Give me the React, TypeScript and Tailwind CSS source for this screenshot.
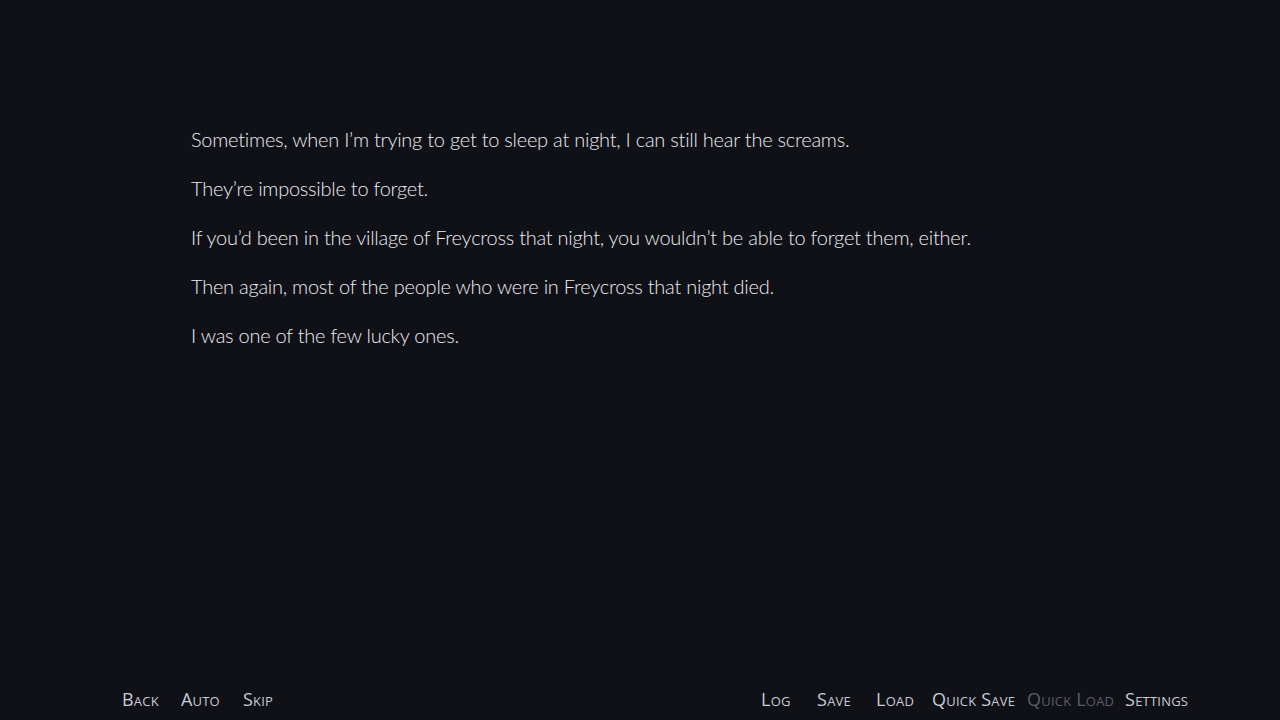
const lines = [
  "Sometimes, when I’m trying to get to sleep at night, I can still hear the screams.",
  "They’re impossible to forget.",
  "If you’d been in the village of Freycross that night, you wouldn’t be able to forget them, either.",
  "Then again, most of the people who were in Freycross that night died.",
  "I was one of the few lucky ones.",
];

// quick menu buttons; w = slot width so each label starts where the next slot begins
const leftMenu = [
  { label: "Back", w: "w-[59px]" },
  { label: "Auto", w: "w-[62px]" },
  { label: "Skip", w: "" },
];
const rightMenu = [
  { label: "Log", w: "w-[56px]", off: false },
  { label: "Save", w: "w-[59px]", off: false },
  { label: "Load", w: "w-[56px]", off: false },
  { label: "Quick Save", w: "w-[95px]", off: false },
  { label: "Quick Load", w: "w-[98px]", off: true },
  { label: "Settings", w: "", off: false },
];

export default function App() {
  return (
    <div className="w-[1280px] h-[720px] bg-[#101117] flex flex-col overflow-hidden">
      <div className="flex-1 pt-[125px] pl-[191px] flex flex-col gap-[20px] font-['Lato',sans-serif] font-light text-[20px] leading-[29px] text-[#ececf2] tracking-[-0.25px]">
        {lines.map((l) => (
          <p key={l}>{l}</p>
        ))}
      </div>
      <div className="h-[40px] flex items-center pl-[122px] pb-[2px] font-['Open_Sans',sans-serif] text-[18px] tracking-[0.2px] [font-variant:small-caps] text-[#c9cad6]">
        <div className="flex">
          {leftMenu.map((m) => (
            <span key={m.label} className={`${m.w} whitespace-nowrap`}>
              {m.label}
            </span>
          ))}
        </div>
        <div className="flex ml-[488px]">
          {rightMenu.map((m) => (
            <span
              key={m.label}
              className={`${m.w} whitespace-nowrap ${m.off ? "text-[#5b5c69]" : ""}`}
            >
              {m.label}
            </span>
          ))}
        </div>
      </div>
    </div>
  );
}
